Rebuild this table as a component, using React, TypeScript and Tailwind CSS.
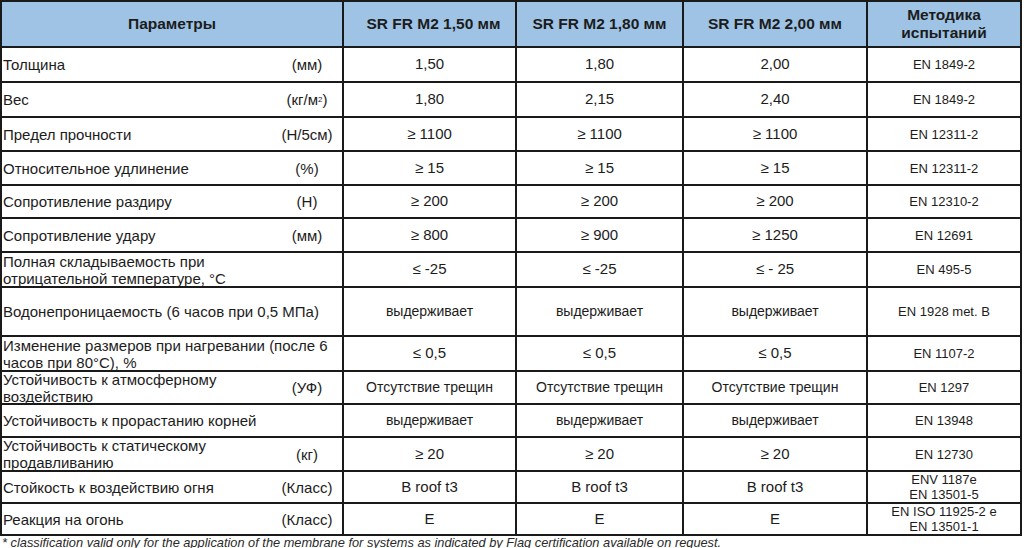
import React from "react";

type Row = {
  label: React.ReactNode;
  unit?: React.ReactNode;
  vals: string[];
  method: React.ReactNode;
  valSize?: string;
};

const rows: Row[] = [
  { label: "Толщина", unit: "(мм)", vals: ["1,50", "1,80", "2,00"], method: "EN 1849-2" },
  {
    label: "Вес",
    unit: (
      <>
        (кг/м<span className="text-[8px] align-top">2</span>)
      </>
    ),
    vals: ["1,80", "2,15", "2,40"],
    method: "EN 1849-2",
  },
  { label: "Предел прочности", unit: "(Н/5см)", vals: ["≥ 1100", "≥ 1100", "≥ 1100"], method: "EN 12311-2" },
  { label: "Относительное удлинение", unit: "(%)", vals: ["≥ 15", "≥ 15", "≥ 15"], method: "EN 12311-2" },
  { label: "Сопротивление раздиру", unit: "(Н)", vals: ["≥ 200", "≥ 200", "≥ 200"], method: "EN 12310-2" },
  { label: "Сопротивление удару", unit: "(мм)", vals: ["≥ 800", "≥ 900", "≥ 1250"], method: "EN 12691" },
  {
    label: (
      <>
        Полная складываемость при
        <br />
        отрицательной температуре, °С
      </>
    ),
    vals: ["≤ -25", "≤ -25", "≤ - 25"],
    method: "EN 495-5",
  },
  {
    label: "Водонепроницаемость (6 часов при 0,5 МПа)",
    vals: ["выдерживает", "выдерживает", "выдерживает"],
    method: "EN 1928 met. B",
    valSize: "text-[14px]",
  },
  {
    label: (
      <>
        Изменение размеров при нагревании (после 6
        <br />
        часов при 80°С), %
      </>
    ),
    vals: ["≤ 0,5", "≤ 0,5", "≤ 0,5"],
    method: "EN 1107-2",
  },
  {
    label: (
      <>
        Устойчивость к атмосферному
        <br />
        воздействию
      </>
    ),
    unit: "(УФ)",
    vals: ["Отсутствие трещин", "Отсутствие трещин", "Отсутствие трещин"],
    method: "EN 1297",
    valSize: "text-[14px]",
  },
  {
    label: "Устойчивость к прорастанию корней",
    vals: ["выдерживает", "выдерживает", "выдерживает"],
    method: "EN 13948",
    valSize: "text-[14px]",
  },
  {
    label: (
      <>
        Устойчивость к статическому
        <br />
        продавливанию
      </>
    ),
    unit: "(кг)",
    vals: ["≥ 20", "≥ 20", "≥ 20"],
    method: "EN 12730",
  },
  {
    label: "Стойкость к воздействию огня",
    unit: "(Класс)",
    vals: ["B roof t3", "B roof t3", "B roof t3"],
    method: (
      <>
        ENV 1187e
        <br />
        EN 13501-5
      </>
    ),
  },
  {
    label: "Реакция на огонь",
    unit: "(Класс)",
    vals: ["E", "E", "E"],
    method: (
      <>
        EN ISO 11925-2 e
        <br />
        EN 13501-1
      </>
    ),
  },
];

export default function App() {
  return (
    <div
      className="w-[1024px] h-[548px] overflow-hidden bg-white text-[#1c1c1c]"
      style={{ fontFamily: '"Liberation Sans", Arial, sans-serif' }}
    >
      <div className="w-[1022px] grid grid-cols-[340px_171px_165px_182px_152px] grid-rows-[44px_33px_33px_32px_32px_31px_32px_33px_47px_33px_31px_31px_32px_30px_30px] gap-[2px] p-[2px] bg-[#1a1a1a]">
        <div className="bg-[#9ec3e5] flex items-center justify-center font-bold text-[15.5px]">Параметры</div>
        <div className="bg-[#9ec3e5] flex items-center justify-center font-bold text-[15.5px] pl-[8px]">SR FR M2 1,50 мм</div>
        <div className="bg-[#9ec3e5] flex items-center justify-center font-bold text-[15.5px]">SR FR M2 1,80 мм</div>
        <div className="bg-[#9ec3e5] flex items-center justify-center font-bold text-[15.5px]">SR FR M2 2,00 мм</div>
        <div className="bg-[#9ec3e5] flex items-center justify-center text-center font-bold text-[15.5px] leading-[18px]">
          Методика
          <br />
          испытаний
        </div>
        {rows.map((r, i) => (
          <React.Fragment key={i}>
            <div className="bg-white flex items-center text-[15px] leading-[17px] pl-px">
              <div className="flex-1 whitespace-nowrap">{r.label}</div>
              {r.unit && <div className="w-[70px] text-center whitespace-nowrap">{r.unit}</div>}
            </div>
            {r.vals.map((v, j) => (
              <div
                key={j}
                className={`bg-white flex items-center justify-center whitespace-nowrap ${r.valSize ?? "text-[15px]"}`}
              >
                {v}
              </div>
            ))}
            <div className="bg-white flex items-center justify-center text-center text-[13px] leading-[15px]">
              {r.method}
            </div>
          </React.Fragment>
        ))}
      </div>
      <div className="text-[12.8px] italic leading-[14px] pl-[2px] text-[#2a2a2a] whitespace-nowrap">
        * classification valid only for the application of the membrane for systems as indicated by Flag certification
        available on request.
      </div>
    </div>
  );
}
